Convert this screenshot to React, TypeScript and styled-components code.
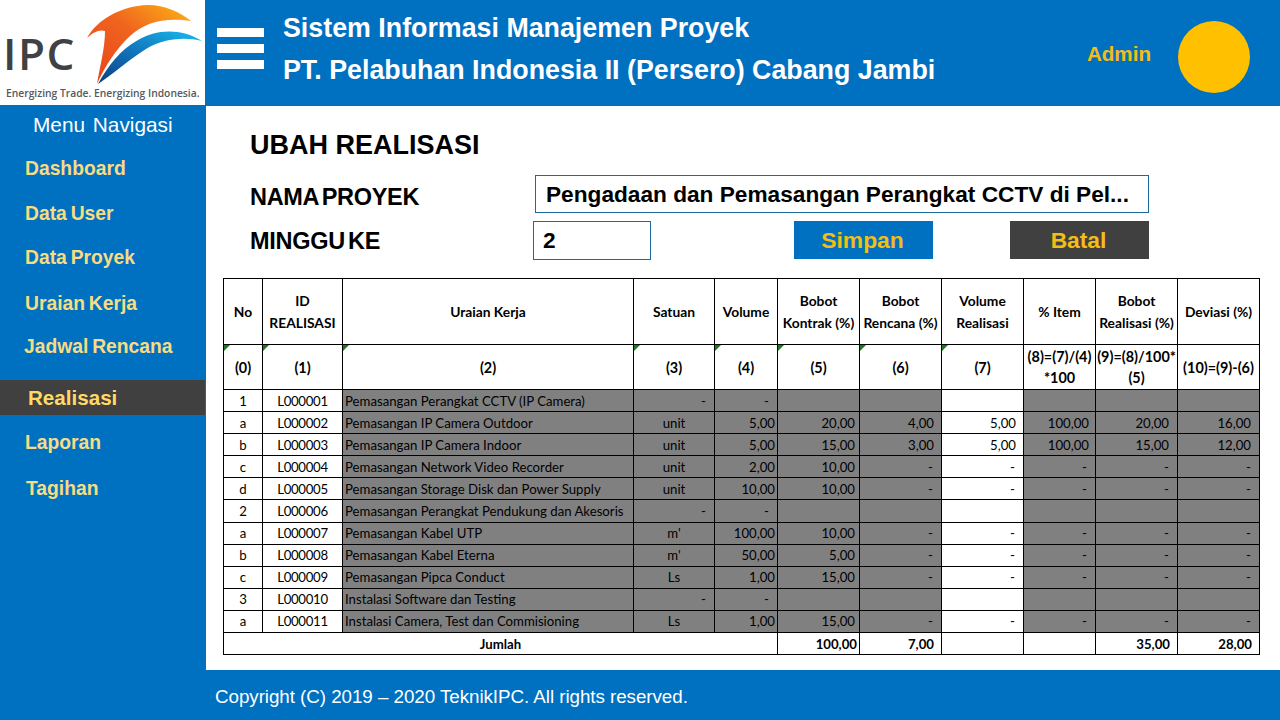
import React from 'react';
import styled, { createGlobalStyle } from 'styled-components';

const GlobalStyle = createGlobalStyle`
  html, body {
    margin: 0;
    padding: 0;
    background: #fff;
    font-family: "Liberation Sans", Arial, sans-serif;
  }
`;

const Page = styled.div`
  width: 1280px;
  height: 720px;
  display: grid;
  grid-template-columns: 206px 1fr;
  grid-template-rows: 106px 564px 50px;
  background: #0070c0;
  overflow: hidden;
`;

const LogoBox = styled.div`
  background: #fff;
  width: 205px;
  height: 105px;
  position: relative;
  overflow: hidden;
`;

const LogoMark = styled.svg`
  position: absolute;
  left: 0;
  top: 0;
`;

const LogoName = styled.span`
  position: absolute;
  left: 3px;
  top: 28px;
  font-family: "Open Sans", sans-serif;
  font-weight: 600;
  font-size: 44px;
  line-height: 50px;
  letter-spacing: 1.5px;
  color: #3f4144;
`;

const LogoTag = styled.span`
  position: absolute;
  left: 6px;
  top: 85px;
  font-family: "Open Sans", sans-serif;
  font-weight: 600;
  font-size: 10.3px;
  line-height: 16px;
  color: #55585c;
  white-space: nowrap;
`;

const Header = styled.header`
  display: flex;
  align-items: center;
  padding: 0 30px 0 11px;
`;

const Burger = styled.div`
  width: 47px;
  display: flex;
  flex-direction: column;
  gap: 7px;
  margin-right: 19px;
  margin-top: -9px;
  span {
    display: block;
    height: 9px;
    background: #fff;
  }
`;

const Titles = styled.div`
  flex: 1;
  display: flex;
  flex-direction: column;
  gap: 10px;
  margin-top: -8px;
  color: #fff;
  font-weight: 700;
  font-size: 26.8px;
  line-height: 32px;
  white-space: nowrap;
`;

const UserName = styled.span`
  color: #f5bd13;
  font-weight: 700;
  font-size: 20.6px;
  margin-right: 27px;
  margin-top: 1px;
`;

const Avatar = styled.div`
  width: 72px;
  height: 72px;
  border-radius: 50%;
  background: #ffc000;
  margin-top: 8px;
`;

const Sidebar = styled.nav`
  display: flex;
  flex-direction: column;
`;

const NavTitle = styled.div`
  color: #fff;
  font-size: 20.8px;
  line-height: 24px;
  padding: 7px 0 0 33px;
  word-spacing: 2px;
`;

const NavItem = styled.div<{ $top: number; $left?: number; $active?: boolean }>`
  margin-top: ${p => p.$top}px;
  padding-left: ${p => p.$left ?? 25}px;
  color: ${p => (p.$active ? '#ffd966' : '#f7dc83')};
  font-weight: 700;
  font-size: ${p => (p.$active ? 20.6 : 19.3)}px;
  word-spacing: -1.5px;
  line-height: ${p => (p.$active ? 35 : 24)}px;
  width: 205px;
  box-sizing: border-box;
  background: ${p => (p.$active ? '#404040' : 'transparent')};
`;

const Main = styled.main`
  background: #fff;
  padding: 22px 20px 0 17px;
`;

const PageTitle = styled.h1`
  margin: 0 0 0 27px;
  font-size: 27px;
  line-height: 34px;
  font-weight: 700;
  color: #000;
`;

const FormGrid = styled.div`
  display: grid;
  grid-template-columns: 284px 118px 142px 139px 77px 139px;
  grid-template-rows: 38px 39px;
  row-gap: 8px;
  margin: 13px 0 18px 27px;
  align-items: center;
`;

const FieldLabel = styled.label<{ $drop: number }>`
  font-size: 23.5px;
  font-weight: 700;
  letter-spacing: -0.3px;
  word-spacing: -3px;
  color: #000;
  white-space: nowrap;
  margin-top: ${p => p.$drop}px;
`;

const TextBox = styled.div<{ $wide?: boolean }>`
  grid-column: ${p => (p.$wide ? '2 / 7' : 'auto')};
  height: 100%;
  box-sizing: border-box;
  border: 1px solid #1a6c9c;
  margin-left: ${p => (p.$wide ? 1 : -1)}px;
  margin-right: ${p => (p.$wide ? 0 : 1)}px;
  padding: 0 0 0 ${p => (p.$wide ? 10 : 9)}px;
  display: flex;
  align-items: center;
  font-size: 22.66px;
  font-weight: 700;
  color: #000;
  white-space: nowrap;
`;

const ActionButton = styled.button<{ $tone: string; $col: number }>`
  grid-column: ${p => p.$col};
  align-self: start;
  height: 38px;
  border: none;
  padding: 0 2px 0 0;
  background: ${p => p.$tone};
  color: #f5bd13;
  font-family: inherit;
  font-size: 22.8px;
  font-weight: 700;
`;

const Sheet = styled.table`
  width: 1037px;
  table-layout: fixed;
  border-collapse: collapse;
  font-family: Lato, "Open Sans", sans-serif;
  font-size: 13.2px;
  color: #000;
  td, th {
    border: 1px solid #000;
    overflow: hidden;
    white-space: nowrap;
    box-sizing: border-box;
  }
`;

const HeadCell = styled.th`
  padding: 0 2px;
  font-weight: 700;
  font-size: 13.8px;
  line-height: 22px;
  text-align: center;
  white-space: normal !important;
`;

const MarkCell = styled.th<{ $mark?: boolean }>`
  position: relative;
  padding: 0;
  font-weight: 700;
  font-size: 14.4px;
  line-height: 21px;
  text-align: center;
  white-space: normal !important;
  &::before {
    content: '';
    display: ${p => (p.$mark ? 'block' : 'none')};
    position: absolute;
    left: 0;
    top: 0;
    border-top: 6px solid #1e7a1e;
    border-right: 6px solid transparent;
  }
`;

const Cell = styled.td<{ $grey?: boolean; $align?: string; $bold?: boolean; $pad?: number; $tight?: boolean }>`
  background: ${p => (p.$grey ? '#808080' : '#fff')};
  text-align: ${p => p.$align ?? 'right'};
  font-weight: ${p => (p.$bold ? 700 : 400)};
  padding: 0 ${p => p.$pad ?? 2}px 0 2px;
  letter-spacing: ${p => (p.$tight ? '-0.3px' : 'normal')};
  height: 22.1px;
  line-height: 20px;
`;

const cols = [39, 80, 291, 81, 63, 82, 82, 82, 72, 82, 82];
const heads = [
  'No', 'ID REALISASI', 'Uraian Kerja', 'Satuan', 'Volume', 'Bobot Kontrak (%)',
  'Bobot Rencana (%)', 'Volume Realisasi', '% Item', 'Bobot Realisasi (%)', 'Deviasi (%)',
];
const subs = [
  '(0)', '(1)', '(2)', '(3)', '(4)', '(5)', '(6)', '(7)', '(8)=(7)/(4) *100', '(9)=(8)/100* (5)', '(10)=(9)-(6)',
];

type Row = [string, string, string, string, string, string, string, string, string, string, string];

const rows: Row[] = [
  ['1', 'L000001', 'Pemasangan Perangkat CCTV (IP Camera)', '-', '-', '', '', '', '', '', ''],
  ['a', 'L000002', 'Pemasangan IP Camera Outdoor', 'unit', '5,00', '20,00', '4,00', '5,00', '100,00', '20,00', '16,00'],
  ['b', 'L000003', 'Pemasangan IP Camera Indoor', 'unit', '5,00', '15,00', '3,00', '5,00', '100,00', '15,00', '12,00'],
  ['c', 'L000004', 'Pemasangan Network Video Recorder', 'unit', '2,00', '10,00', '-', '-', '-', '-', '-'],
  ['d', 'L000005', 'Pemasangan Storage Disk dan Power Supply', 'unit', '10,00', '10,00', '-', '-', '-', '-', '-'],
  ['2', 'L000006', 'Pemasangan Perangkat Pendukung dan Akesoris', '-', '-', '', '', '', '', '', ''],
  ['a', 'L000007', 'Pemasangan Kabel UTP', "m'", '100,00', '10,00', '-', '-', '-', '-', '-'],
  ['b', 'L000008', 'Pemasangan Kabel Eterna', "m'", '50,00', '5,00', '-', '-', '-', '-', '-'],
  ['c', 'L000009', 'Pemasangan Pipca Conduct', 'Ls', '1,00', '15,00', '-', '-', '-', '-', '-'],
  ['3', 'L000010', 'Instalasi Software dan Testing', '-', '-', '', '', '', '', '', ''],
  ['a', 'L000011', 'Instalasi Camera, Test dan Commisioning', 'Ls', '1,00', '15,00', '-', '-', '-', '-', '-'],
];

// right padding per numeric column, the sheet does not line them up evenly
const pads = [2, 4, 7, 7, 6, 8, 8];
const padFor = (value: string, i: number) => (value === '-' ? 8 : pads[i]);

const FooterBar = styled.footer`
  grid-column: 1 / 3;
  display: flex;
  align-items: center;
  padding: 4px 0 0 215px;
  color: #fff;
  font-size: 18.8px;
  letter-spacing: -0.05px;
`;

function Logo() {
  return (
    <LogoBox>
      <LogoMark width="205" height="105" viewBox="0 0 205 105">
        <defs>
          <linearGradient id="sw1" x1="0" y1="1" x2="1" y2="0">
            <stop offset="0" stopColor="#e8401c" />
            <stop offset="0.55" stopColor="#f0641e" />
            <stop offset="1" stopColor="#fdb515" />
          </linearGradient>
          <linearGradient id="sw2" x1="0" y1="1" x2="1" y2="0">
            <stop offset="0" stopColor="#0b3f80" />
            <stop offset="0.5" stopColor="#1277bd" />
            <stop offset="1" stopColor="#18bdee" />
          </linearGradient>
        </defs>
        <path
          d="M97 84 C100 66 105 48 105 31 C100 29 93 32 87 38 C97 20 120 6 148 5 C165 5 180 12 191 21 C165 17 145 22 130 36 C116 49 105 66 97 84 Z"
          fill="url(#sw1)"
        />
        <path
          d="M98 84 C108 66 120 50 138 40 C155 30 180 27 202 41 C182 36 160 40 146 49 C130 59 113 74 98 84 Z"
          fill="url(#sw2)"
        />
      </LogoMark>
      <LogoName>IPC</LogoName>
      <LogoTag>Energizing Trade. Energizing Indonesia.</LogoTag>
    </LogoBox>
  );
}

export default function App() {
  return (
    <Page>
      <GlobalStyle />
      <Logo />
      <Header>
        <Burger><span /><span /><span /></Burger>
        <Titles>
          <div>Sistem Informasi Manajemen Proyek</div>
          <div>PT. Pelabuhan Indonesia II (Persero) Cabang Jambi</div>
        </Titles>
        <UserName>Admin</UserName>
        <Avatar />
      </Header>
      <Sidebar>
        <NavTitle>Menu Navigasi</NavTitle>
        <NavItem $top={20}>Dashboard</NavItem>
        <NavItem $top={21}>Data User</NavItem>
        <NavItem $top={20}>Data Proyek</NavItem>
        <NavItem $top={22}>Uraian Kerja</NavItem>
        <NavItem $top={19} $left={24}>Jadwal Rencana</NavItem>
        <NavItem $top={21} $left={28} $active>Realisasi</NavItem>
        <NavItem $top={16}>Laporan</NavItem>
        <NavItem $top={22} $left={26}>Tagihan</NavItem>
      </Sidebar>
      <Main>
        <PageTitle>UBAH REALISASI</PageTitle>
        <FormGrid>
          <FieldLabel $drop={7}>NAMA PROYEK</FieldLabel>
          <TextBox $wide>Pengadaan dan Pemasangan Perangkat CCTV di Pel...</TextBox>
          <FieldLabel $drop={2}>MINGGU KE</FieldLabel>
          <TextBox>2</TextBox>
          <ActionButton $tone="#0070c0" $col={4}>Simpan</ActionButton>
          <ActionButton $tone="#404040" $col={6}>Batal</ActionButton>
        </FormGrid>
        <Sheet>
          <colgroup>
            {cols.map((w, i) => <col key={i} style={{ width: w }} />)}
          </colgroup>
          <thead>
            <tr style={{ height: 66 }}>
              {heads.map(h => <HeadCell key={h}>{h}</HeadCell>)}
            </tr>
            <tr style={{ height: 45 }}>
              {subs.map((s, i) => <MarkCell key={s} $mark={i < 8}>{s}</MarkCell>)}
            </tr>
          </thead>
          <tbody>
            {rows.map(r => (
              <tr key={r[1]}>
                <Cell $align="center">{r[0]}</Cell>
                <Cell $align="center" $tight>{r[1]}</Cell>
                <Cell $grey $align="left">{r[2]}</Cell>
                <Cell $grey $align={r[3] === '-' ? 'right' : 'center'} $pad={r[3] === '-' ? 8 : 2}>{r[3]}</Cell>
                {r.slice(4).map((v, i) => (
                  <Cell key={i} $grey={i !== 3} $pad={padFor(v, i)}>{v}</Cell>
                ))}
              </tr>
            ))}
            <tr>
              <Cell colSpan={5} $align="center" $bold>Jumlah</Cell>
              <Cell $bold>100,00</Cell>
              <Cell $bold $pad={7}>7,00</Cell>
              <Cell />
              <Cell />
              <Cell $bold $pad={7}>35,00</Cell>
              <Cell $bold $pad={7}>28,00</Cell>
            </tr>
          </tbody>
        </Sheet>
      </Main>
      <FooterBar>Copyright (C) 2019 – 2020 TeknikIPC. All rights reserved.</FooterBar>
    </Page>
  );
}
